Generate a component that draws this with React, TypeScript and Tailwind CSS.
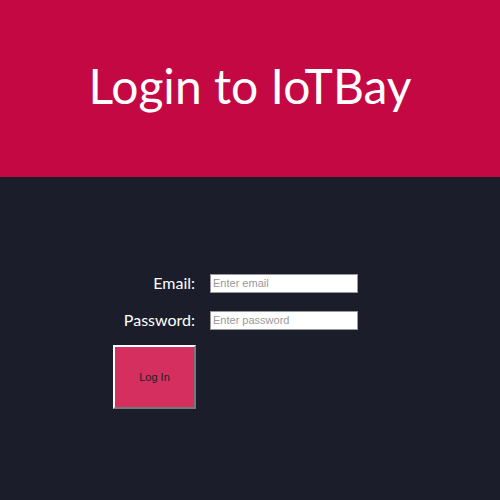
export default function App() {
  return (
    <div className="min-h-[500px] w-[500px] bg-[#1b1e2a] font-['Lato','Open_Sans',sans-serif]">
      <div className="h-[177px] bg-[#c40843] flex items-center justify-center">
        <h1 className="text-white text-[48px] font-normal leading-none pb-[6px]">
          Login to IoTBay
        </h1>
      </div>

      <div className="pt-[94px] pl-[113px]">
        <div className="grid grid-cols-[82px_auto] gap-x-[15px] gap-y-[13px] items-center">
          <label className="text-white text-[16px] text-right">Email:</label>
          <input
            type="text"
            placeholder="Enter email"
            className="w-[148px] h-[19px] bg-white border border-[#999] px-[2px] text-[11px] placeholder:text-[#999] font-['Liberation_Sans',sans-serif]"
          />
          <label className="text-white text-[16px] text-right">Password:</label>
          <input
            type="password"
            placeholder="Enter password"
            className="w-[148px] h-[19px] bg-white border border-[#999] px-[2px] text-[11px] placeholder:text-[#999] font-['Liberation_Sans',sans-serif]"
          />
        </div>

        <button className="mt-[13px] w-[83px] h-[64px] bg-[#d42f5e] border-2 border-t-white border-l-white border-r-[#777] border-b-[#777] text-[11px] text-[#222] font-['Liberation_Sans',sans-serif]">
          Log In
        </button>
      </div>
    </div>
  )
}
